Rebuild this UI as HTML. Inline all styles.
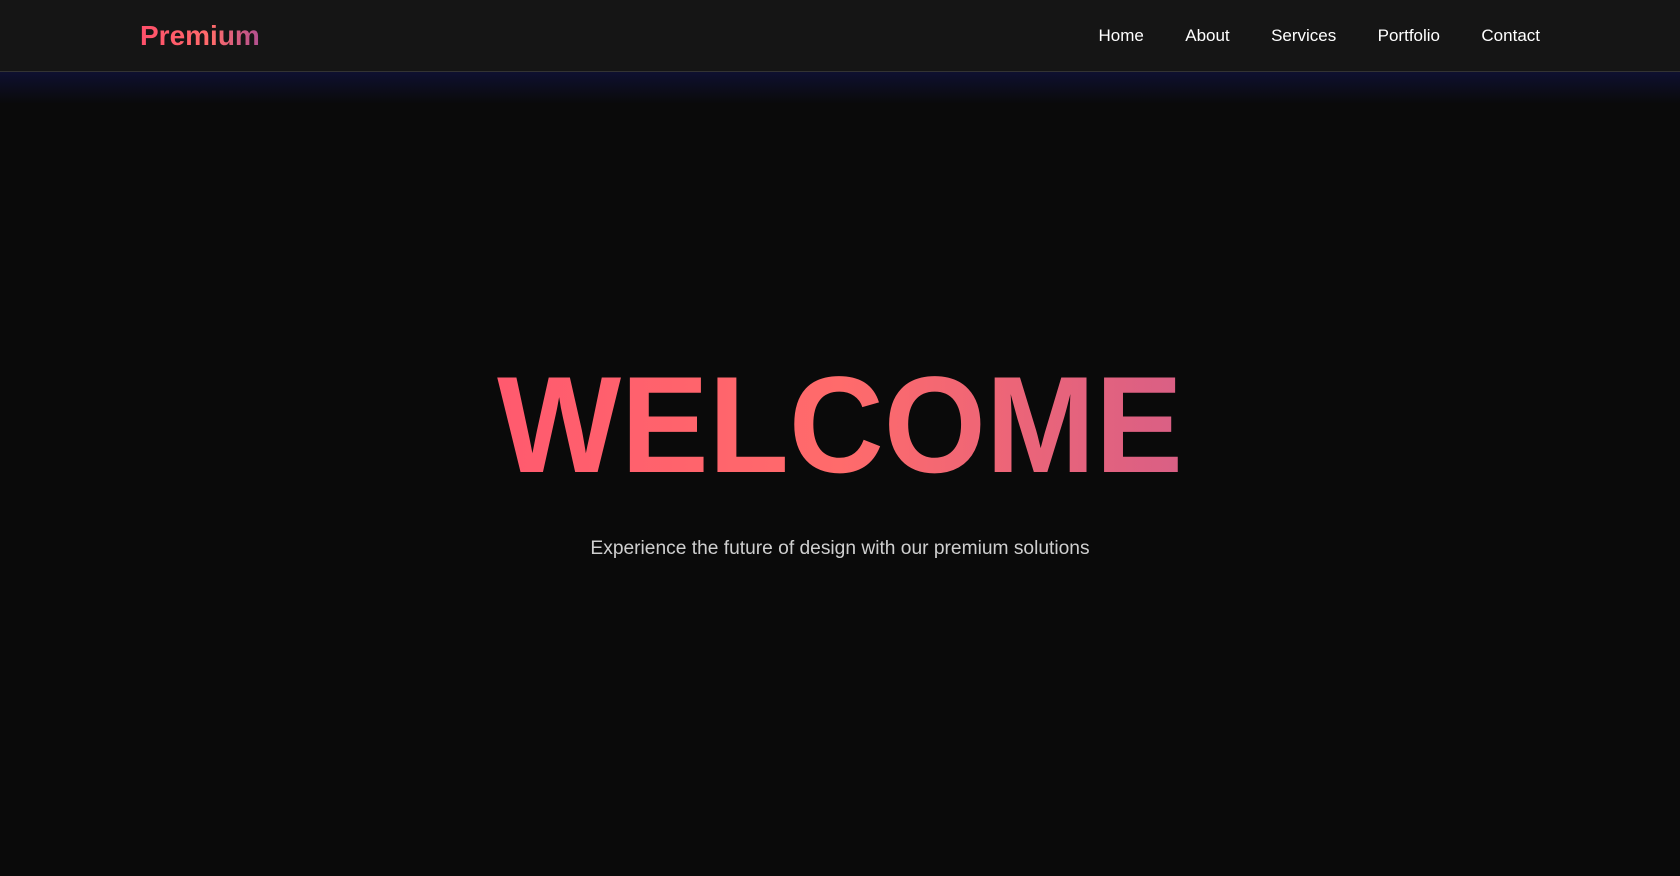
<!DOCTYPE html>
<html><head><meta charset="utf-8"><style>
*{margin:0;padding:0;box-sizing:border-box}
html,body{width:1680px;height:876px;overflow:hidden;background:#0a0a0a;font-family:"Liberation Sans",Arial,sans-serif}
header{position:absolute;left:0;top:0;width:1680px;height:72px;background:#151515;border-bottom:1px solid #333;}
.glow{position:absolute;left:0;top:72px;width:1680px;height:32px;background:linear-gradient(#0e1030,rgba(10,10,10,0))}
.logo{position:absolute;left:140px;top:18px;font-size:28px;font-weight:bold;background:linear-gradient(90deg,#ff4f6a,#ff6b6b 60%,#b04f90);-webkit-background-clip:text;background-clip:text;color:transparent;line-height:36px}
nav{position:absolute;right:140px;top:25px;display:flex;gap:41.4px;font-size:17px;color:#fff;line-height:22px}
h1{position:absolute;left:0;width:1680px;top:357px;text-align:center;font-size:137.4px;font-weight:bold;line-height:137.4px;transform:scaleX(0.956);transform-origin:840px 0}
h1 span{background:linear-gradient(90deg,#ff5a6e,#ff6b6b 50%,#d95f85);-webkit-background-clip:text;background-clip:text;color:transparent}
p{position:absolute;left:0;width:1680px;top:538px;text-align:center;font-size:19.2px;color:#cfcfcf}
</style></head><body>
<header><div class="logo">Premium</div>
<nav><span>Home</span><span>About</span><span>Services</span><span>Portfolio</span><span>Contact</span></nav></header>
<div class="glow"></div>
<h1><span>WELCOME</span></h1>
<p>Experience the future of design with our premium solutions</p>
</body></html>
